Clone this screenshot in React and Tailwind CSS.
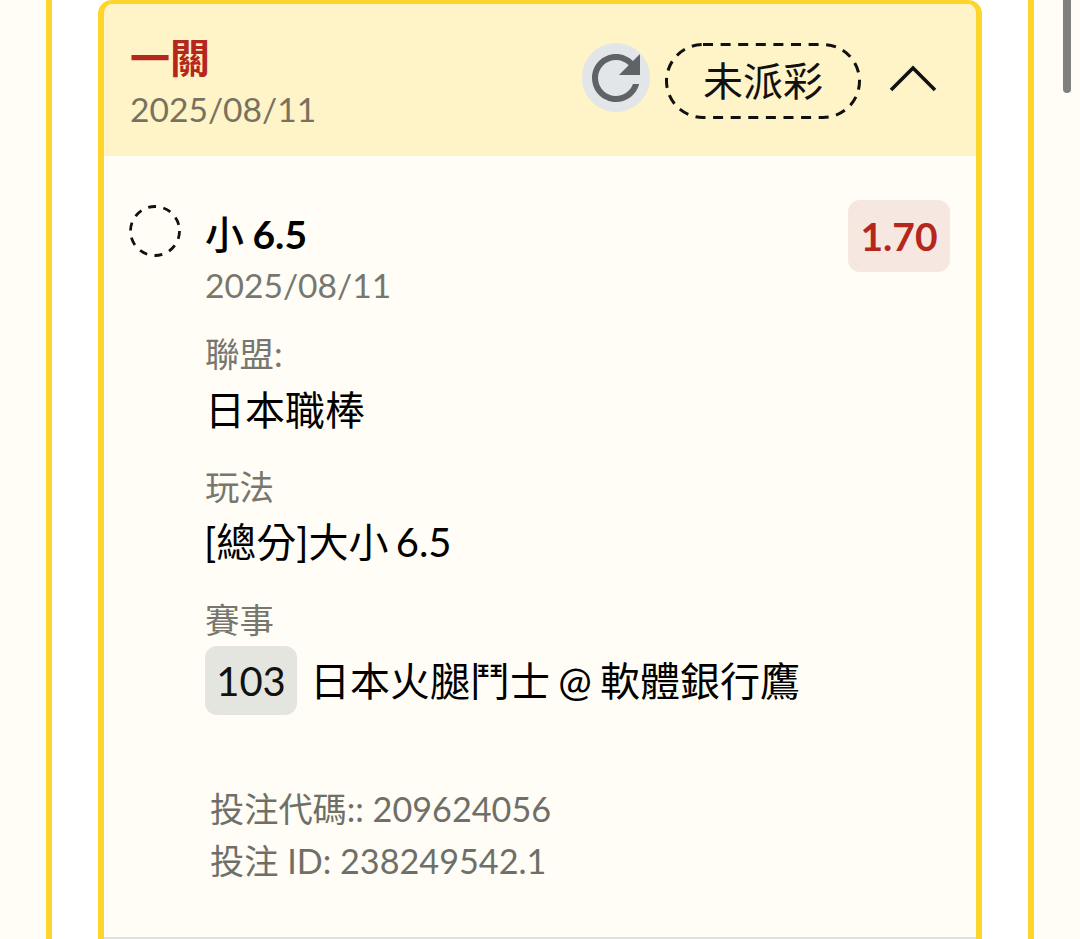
import React from "react";

function Label({ children, className = "" }) {
  return <div className={"pl-[1px] text-[34.5px] leading-[40px] text-[#77776f] " + className}>{children}</div>;
}

export default function App() {
  return (
    <div className="relative h-[939px] w-[1080px] overflow-hidden bg-[#fffdf5] font-['Lato','Noto_Sans_CJK_TC',sans-serif]">
      <div className="ml-[46px] h-full w-[988px] border-x-[6px] border-[#fdd52d] bg-white px-[46px]">
        <div className="h-full w-[884px] overflow-hidden rounded-t-[14px] border-x-[6px] border-t-[4px] border-[#fdd52d] bg-[#fffdf5]">
          <div className="flex h-[152px] items-start justify-between bg-[#fff3c8] pl-[26px] pr-[39px]">
            <div className="pt-[32px]">
              <div className="text-[40px] leading-[44px] font-bold text-[#b5271d]">一關</div>
              <div className="mt-[9px] text-[33.6px] leading-[40px] text-[#77725f]">2025/08/11</div>
            </div>
            <div className="flex items-start pt-[39px]">
              <div className="flex h-[69px] w-[68px] items-center justify-center rounded-full bg-[#e3e6e8]">
                <svg viewBox="0 0 24 24" className="h-[72px] w-[72px] shrink-0" fill="#5f6368">
                  <path d="M17.65 6.35C16.2 4.9 14.21 4 12 4c-4.42 0-7.99 3.58-7.99 8s3.57 8 7.99 8c3.73 0 6.84-2.55 7.73-6h-2.08c-.82 2.33-3.04 4-5.65 4-3.31 0-6-2.69-6-6s2.69-6 6-6c1.66 0 3.14.69 4.22 1.78L13 11h7V4l-2.35 2.35z" />
                </svg>
              </div>
              <div className="relative ml-[15px] flex h-[76px] w-[196px] items-center justify-center text-[40px] leading-none text-[#111]">
                <svg className="absolute inset-0 h-[76px] w-[196px]" viewBox="0 0 196 76" fill="none">
                  <rect x="1.5" y="1.5" width="193" height="73" rx="36.5" stroke="#111" strokeWidth="3" strokeDasharray="10 7.6" />
                </svg>
                <span className="relative">未派彩</span>
              </div>
              <svg className="ml-[28px] mt-[20px] h-[30px] w-[48px]" viewBox="0 0 48 30" fill="none">
                <path d="M2 27 L24 5 L46 27" stroke="#111" strokeWidth="3.6" />
              </svg>
            </div>
          </div>

          <div className="pl-[25px] pr-[26px] pt-[44px]">
            <div className="flex items-start justify-between">
              <div className="flex">
                <svg className="mt-[5px] mb-[1px] h-[52px] w-[52px] shrink-0" viewBox="0 0 52 52" fill="none">
                  <circle cx="26" cy="26" r="24.5" stroke="#111" strokeWidth="2.8" strokeDasharray="8 7.4" />
                </svg>
                <div className="ml-[24px]">
                  <div className="pt-[12px] text-[39px] leading-[44px] font-bold text-black [word-spacing:-1px]"><span className="font-medium">小</span> 6.5</div>
                  <div className="mt-[9px] text-[33.6px] leading-[40px] text-[#77776f]">2025/08/11</div>
                </div>
              </div>
              <div className="flex h-[72px] w-[102px] items-center justify-center rounded-[12px] bg-[#f6e7e1] text-[39px] font-bold text-[#b5271d]">1.70</div>
            </div>

            <div className="pl-[75px]">
              <Label className="mt-[29px]">聯盟:</Label>
              <div className="mt-[12px] pl-[1px] text-[40px] leading-[48px] text-black">日本職棒</div>
              <Label className="mt-[33px]">玩法</Label>
              <div className="mt-[11px] text-[40px] leading-[48px] text-black [word-spacing:-3px]">[總分]大小 6.5</div>
              <Label className="mt-[34px]">賽事</Label>
              <div className="ml-[1px] mt-[6px] flex items-center">
                <div className="flex h-[69px] w-[92px] items-center justify-center rounded-[12px] bg-[#e5e5e0] pt-[1px] text-[40px] text-[#111]">103</div>
                <div className="ml-[13px] text-[40px] leading-[48px] text-black [word-spacing:-2px]">日本火腿鬥士 @ 軟體銀行鷹</div>
              </div>
              <div className="mt-[68px] pl-[6px] text-[34.2px] leading-[52px] text-[#6f6f69]">
                <div>投注代碼:: 209624056</div>
                <div>投注 ID: 238249542.1</div>
              </div>
            </div>
          </div>
          <div className="absolute bottom-0 left-[104px] h-[2px] w-[872px] bg-[#e0e0dc]" />
        </div>
      </div>
      <div className="absolute left-[1063px] top-0 h-[93px] w-[8px] rounded-b-full bg-[#808080]" />
    </div>
  );
}
